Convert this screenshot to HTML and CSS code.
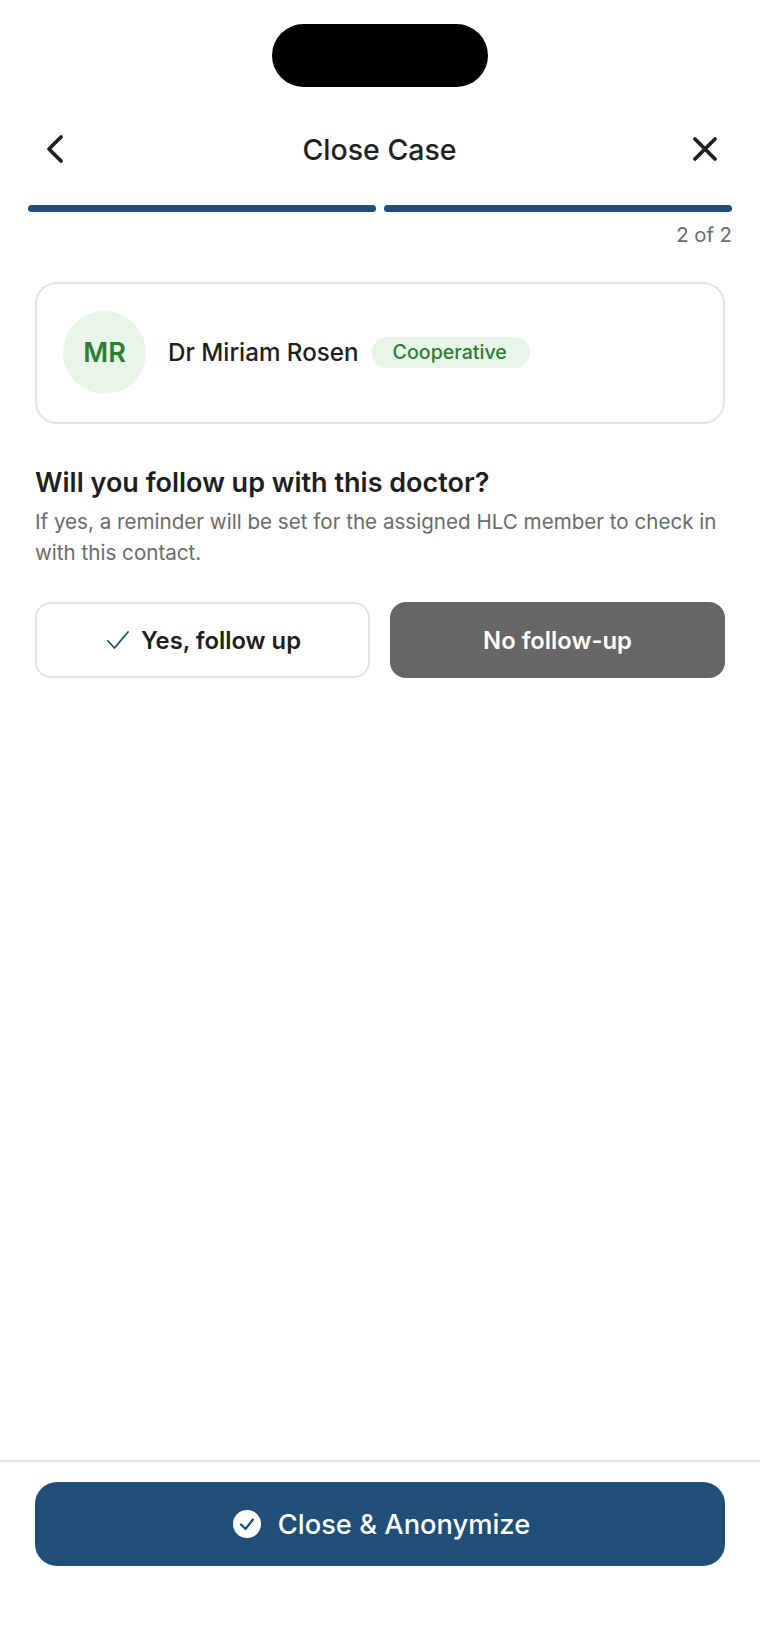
FILE: index.html
```html
<!DOCTYPE html>
<html lang="en">
<head>
  <meta charset="UTF-8">
  <meta name="viewport" content="width=device-width, initial-scale=1.0">
  <title>Close Case</title>
  <link rel="stylesheet" href="styles.css">
</head>
<body>
  <div class="screen">
    <!-- Camera cutout -->
    <div class="status-area">
      <div class="island"></div>
    </div>

    <!-- Navbar -->
    <nav class="navbar">
      <button class="nav-btn" aria-label="Back">
        <svg width="20" height="30" viewBox="0 0 20 30" fill="none" stroke="#1f1f1f" stroke-width="3.8" stroke-linecap="round" stroke-linejoin="round"><path d="M16 3 L4 15 L16 27"/></svg>
      </button>
      <h1 class="nav-title">Close Case</h1>
      <button class="nav-btn" aria-label="Close">
        <svg width="26" height="26" viewBox="0 0 26 26" fill="none" stroke="#1f1f1f" stroke-width="3.8" stroke-linecap="round"><path d="M3 3 L23 23 M23 3 L3 23"/></svg>
      </button>
    </nav>

    <!-- Progress -->
    <div class="progress">
      <div class="progress-bar"></div>
      <div class="progress-bar"></div>
    </div>
    <div class="progress-label">2 of 2</div>

    <main class="content">
      <div class="contact-card">
        <div class="avatar">MR</div>
        <span class="contact-name">Dr Miriam Rosen</span>
        <span class="pill">Cooperative</span>
      </div>

      <h2 class="question">Will you follow up with this doctor?</h2>
      <p class="hint">If yes, a reminder will be set for the assigned HLC member to check in with this contact.</p>

      <div class="choices">
        <button class="choice">
          <svg class="choice-check" width="24" height="20" viewBox="0 0 24 20" fill="none" stroke="#1f4e79" stroke-width="1.8" stroke-linecap="round" stroke-linejoin="round"><path d="M2 11 L8.5 18 L22 2"/></svg>
          Yes, follow up
        </button>
        <button class="choice choice-selected">No follow-up</button>
      </div>
    </main>

    <!-- Footer -->
    <footer class="footer">
      <button class="primary-btn">
        <svg width="28" height="28" viewBox="0 0 28 28"><circle cx="14" cy="14" r="14" fill="#fff"/><path d="M8 14.5 L12.5 19 L20 9.5" fill="none" stroke="#1f4e79" stroke-width="2.2" stroke-linecap="round" stroke-linejoin="round"/></svg>
        Close &amp; Anonymize
      </button>
    </footer>
  </div>
</body>
</html>
```

FILE: styles.css
```css
/* Styles */
* {
  box-sizing: border-box;
}

body {
  margin: 0;
  background: #ffffff;
  color: #1f1f1f;
  font-family: Inter, "Liberation Sans", sans-serif;
}

button {
  font-family: inherit;
  cursor: pointer;
}

.screen {
  display: flex;
  flex-direction: column;
  height: 1652px;
}

.status-area {
  display: flex;
  justify-content: center;
  padding-top: 24px;
}

.island {
  width: 216px;
  height: 63px;
  background: #000000;
  border-radius: 32px;
}

/* Navbar */
.navbar {
  display: flex;
  align-items: center;
  justify-content: space-between;
  height: 50px;
  margin-top: 37px;
  padding: 0 42px 0 45px;
}

.nav-btn {
  display: flex;
  padding: 0;
  border: none;
  background: none;
}

.nav-title {
  margin: 0 0 0 2px;
  font-size: 28.5px;
  font-weight: 500;
}

/* Progress */
.progress {
  display: flex;
  gap: 8px;
  margin-top: 31px;
  padding: 0 28px;
}

.progress-bar {
  flex: 1;
  height: 7px;
  background: #1f4e79;
  border-radius: 4px;
}

.progress-label {
  margin-top: 11px;
  padding-right: 28px;
  text-align: right;
  font-size: 20.3px;
  line-height: 24px;
  color: #6b6b6b;
}

/* Content */
.content {
  flex: 1;
  padding: 0 35px;
}

.contact-card {
  display: flex;
  align-items: center;
  height: 142px;
  margin-top: 35px;
  padding: 0 0 2px 26px;
  border: 2px solid #e3e3e3;
  border-radius: 22px;
}

.avatar {
  display: flex;
  align-items: center;
  justify-content: center;
  width: 83px;
  height: 83px;
  background: #e8f5e9;
  border-radius: 50%;
  color: #2e7d32;
  font-size: 27px;
  font-weight: 600;
}

.contact-name {
  margin-left: 22px;
  font-size: 24.2px;
  font-weight: 500;
}

.pill {
  margin-left: 13px;
  padding: 4px 23px 4px 21px;
  background: #e8f5e9;
  border-radius: 16px;
  color: #2e7d32;
  font-size: 19.6px;
  line-height: 23px;
  font-weight: 500;
}

.question {
  margin: 41px 0 0;
  font-size: 27px;
  line-height: 36px;
  font-weight: 600;
}

.hint {
  margin: 5px 0 0;
  font-size: 20.6px;
  line-height: 31px;
  color: #6b6b6b;
}

.choices {
  display: flex;
  gap: 20px;
  margin-top: 34px;
}

.choice {
  display: flex;
  flex: 1;
  align-items: center;
  justify-content: center;
  gap: 11px;
  height: 76px;
  background: #ffffff;
  border: 2px solid #e3e3e3;
  border-radius: 16px;
  color: #1f1f1f;
  font-size: 23.8px;
  font-weight: 600;
}

.choice-check {
  margin-left: 2px;
}

.choice-selected {
  background: #666666;
  border-color: #666666;
  color: #ffffff;
}

/* Footer */
.footer {
  height: 192px;
  padding: 20px 35px 0;
  border-top: 2px solid #e3e3e3;
}

.primary-btn {
  display: flex;
  align-items: center;
  justify-content: center;
  gap: 17px;
  width: 100%;
  height: 84px;
  padding: 0 0 0 3px;
  background: #1f4e79;
  border: none;
  border-radius: 22px;
  color: #ffffff;
  font-size: 27.3px;
  font-weight: 500;
}
```
